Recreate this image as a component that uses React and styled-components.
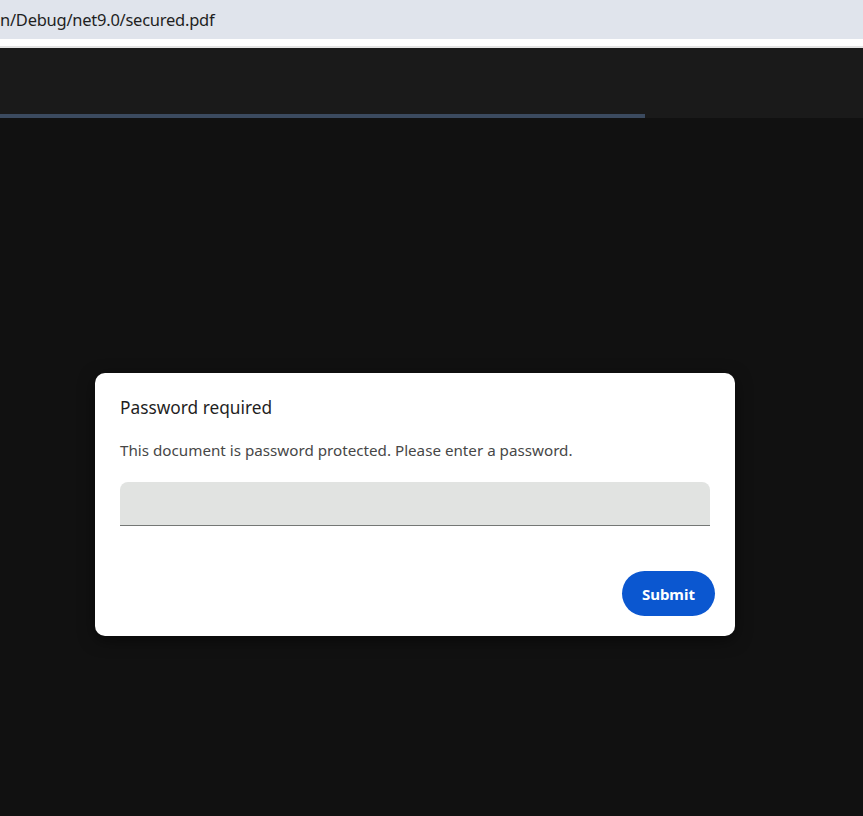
import React from "react";
import styled, { createGlobalStyle } from "styled-components";

const Global = createGlobalStyle`
  html, body { margin: 0; padding: 0; background: #111111; }
  body { font-family: "Noto Sans", "Open Sans", sans-serif; }
  #root { min-height: 100vh; display: flex; flex-direction: column; }
`;

const AddressBar = styled.div`
  height: 39px;
  background: #e0e4ec;
  display: flex;
  align-items: center;
  font-size: 16.5px;
  letter-spacing: -0.25px;
  color: #1f1f1f;
  white-space: nowrap;
  overflow: hidden;
`;

const Spacer = styled.div`
  height: 9px;
  background: #ffffff;
  border-bottom: 2px solid #e3e3e3;
  box-sizing: border-box;
`;

const Toolbar = styled.div`
  height: 66px;
  background: #1a1a1a;
`;

const Progress = styled.div`
  height: 4px;
  background: #1a1a1a;
  display: flex;
`;

const ProgressFill = styled.div`
  height: 100%;
  background: #3b4a5f;
`;

const Viewer = styled.div`
  flex: 1;
  background: #111111;
  display: flex;
  justify-content: flex-start;
  padding-top: 255px;
  padding-left: 95px;
`;

const Dialog = styled.div`
  width: 640px;
  height: 263px;
  box-sizing: border-box;
  background: #ffffff;
  border-radius: 10px;
  box-shadow: 0 4px 16px rgba(0, 0, 0, 0.5);
  padding: 23px 20px 20px 25px;
  display: flex;
  flex-direction: column;
`;

const Title = styled.h2`
  margin: 0;
  font-weight: 400;
  font-size: 17.3px;
  line-height: 24px;
  color: #1f1f1f;
`;

const Message = styled.p`
  margin: 20px 0 0;
  font-size: 15.2px;
  line-height: 20px;
  color: #474747;
`;

const Input = styled.input`
  margin: 22px 5px 0 0;
  height: 44px;
  box-sizing: border-box;
  border: none;
  border-bottom: 1px solid #747775;
  border-radius: 8px 8px 0 0;
  background: #e1e3e1;
  outline: none;
  padding: 0 12px;
  font-size: 15px;
`;

const Actions = styled.div`
  margin-top: auto;
  display: flex;
  justify-content: flex-end;
`;

const Button = styled.button`
  height: 45px;
  padding: 0 20px;
  min-width: 93px;
  border: none;
  border-radius: 23px;
  background: #0b57d0;
  color: #ffffff;
  font-family: "Noto Sans", sans-serif;
  font-weight: 700;
  font-size: 15px;
  cursor: pointer;
`;

export default function App() {
  return (
    <>
      <Global />
      <AddressBar>n/Debug/net9.0/secured.pdf</AddressBar>
      <Spacer />
      <Toolbar />
      <Progress>
        <ProgressFill style={{ width: "645px" }} />
      </Progress>
      <Viewer>
        <Dialog>
          <Title>Password required</Title>
          <Message>This document is password protected. Please enter a password.</Message>
          <Input type="password" />
          <Actions>
            <Button>Submit</Button>
          </Actions>
        </Dialog>
      </Viewer>
    </>
  );
}
